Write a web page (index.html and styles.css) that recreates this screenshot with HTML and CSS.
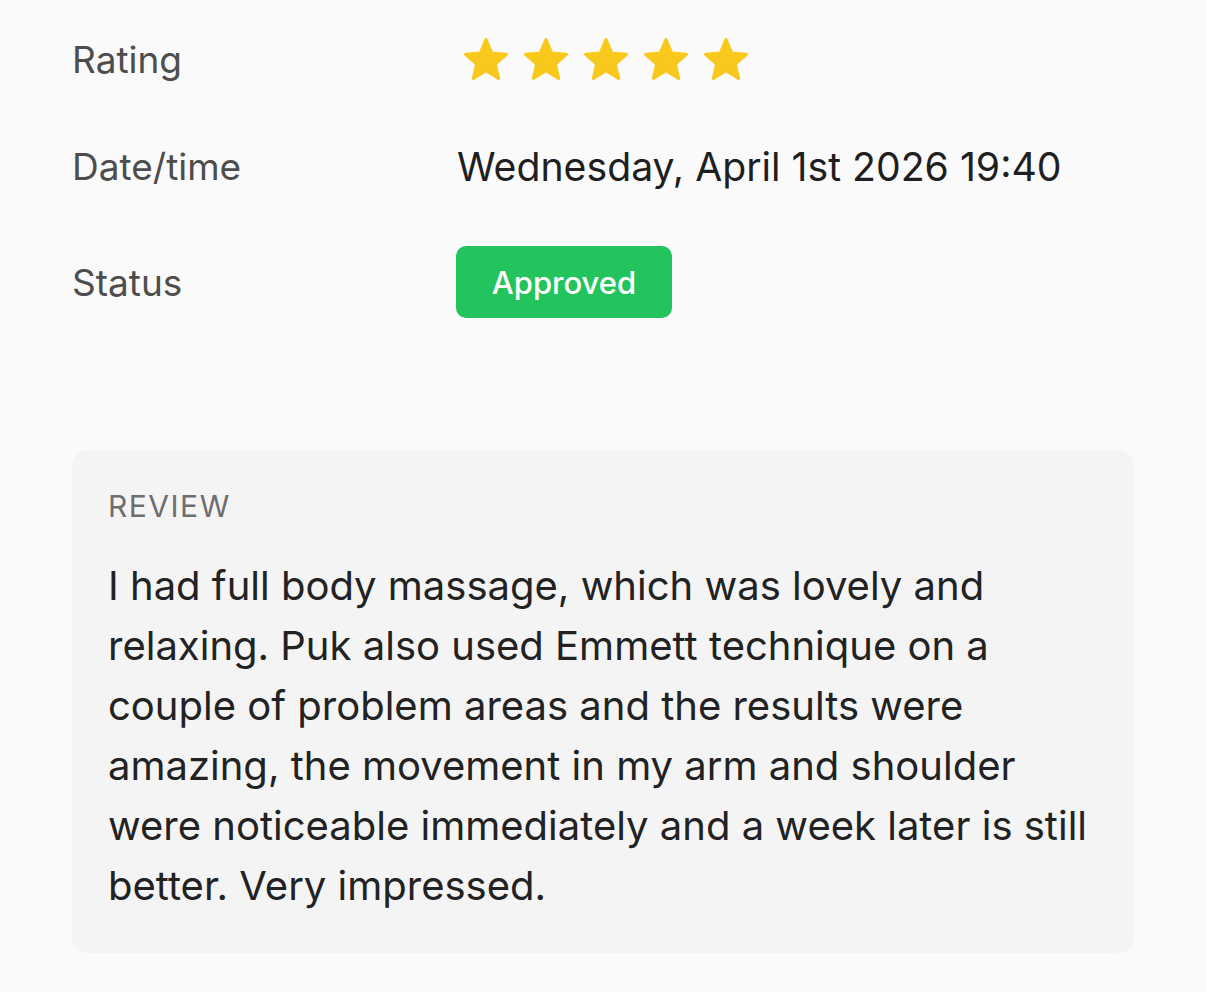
FILE: index.html
```html
<!DOCTYPE html>
<html>
<head>
<meta charset="utf-8">
<link rel="stylesheet" href="styles.css">
</head>
<body>
<main class="page">
  <section class="details">
    <div class="row row-rating">
      <div class="label">Rating</div>
      <div class="value stars">
        <svg class="star" viewBox="1.25 1.25 21.5 20.5"><path d="M12 17.27L18.18 21l-1.64-7.03L22 9.24l-7.19-.61L12 2 9.19 8.63 2 9.24l5.46 4.73L5.82 21z"/></svg>
        <svg class="star" viewBox="1.25 1.25 21.5 20.5"><path d="M12 17.27L18.18 21l-1.64-7.03L22 9.24l-7.19-.61L12 2 9.19 8.63 2 9.24l5.46 4.73L5.82 21z"/></svg>
        <svg class="star" viewBox="1.25 1.25 21.5 20.5"><path d="M12 17.27L18.18 21l-1.64-7.03L22 9.24l-7.19-.61L12 2 9.19 8.63 2 9.24l5.46 4.73L5.82 21z"/></svg>
        <svg class="star" viewBox="1.25 1.25 21.5 20.5"><path d="M12 17.27L18.18 21l-1.64-7.03L22 9.24l-7.19-.61L12 2 9.19 8.63 2 9.24l5.46 4.73L5.82 21z"/></svg>
        <svg class="star" viewBox="1.25 1.25 21.5 20.5"><path d="M12 17.27L18.18 21l-1.64-7.03L22 9.24l-7.19-.61L12 2 9.19 8.63 2 9.24l5.46 4.73L5.82 21z"/></svg>
      </div>
    </div>
    <div class="row row-date">
      <div class="label">Date/time</div>
      <div class="value date">Wednesday, April 1st 2026 19:40</div>
    </div>
    <div class="row row-status">
      <div class="label">Status</div>
      <div class="value"><span class="badge">Approved</span></div>
    </div>
  </section>
  <section class="review">
    <h2 class="review-title">REVIEW</h2>
    <p class="review-text">I had full body massage, which was lovely and relaxing. Puk also used Emmett technique on a couple of problem areas and the results were amazing, the movement in my arm and shoulder were noticeable immediately and a week later is still better. Very impressed.</p>
  </section>
</main>
</body>
</html>
```

FILE: styles.css
```css
* { box-sizing: border-box; }
html, body { margin: 0; padding: 0; }
body {
  background: #fafafa;
  font-family: "Inter", "Liberation Sans", sans-serif;
  color: #222;
  width: 1206px;
  height: 992px;
  overflow: hidden;
}
.page {
  padding: 0 72px;
}
.details {
  display: flex;
  flex-direction: column;
}
.row {
  display: flex;
  align-items: center;
}
.row-rating { height: 118px; }
.row-date { height: 96px; }
.row-status { height: 136px; }
.label {
  width: 385px;
  flex: none;
  font-size: 37px;
  color: #4d4d4d;
}
.stars {
  display: flex;
  gap: 16px;
  padding-left: 7px;
}
.star {
  width: 44px;
  height: 42px;
  fill: #f8c81c;
  stroke: #f8c81c;
  stroke-width: 1.5;
  stroke-linejoin: round;
}
.date {
  font-size: 39.2px;
  color: #1f1f1f;
}
.badge {
  display: inline-flex;
  align-items: center;
  justify-content: center;
  width: 216px;
  height: 72px;
  border-radius: 10px;
  background: #23c35d;
  color: #fff;
  font-size: 31px;
  font-weight: 500;
  margin-left: -1px;
}
.review {
  margin-top: 100px;
  background: #f4f4f4;
  border-radius: 16px;
  padding: 38px 36px 0;
  height: 503px;
}
.review-title {
  margin: 0;
  font-size: 30px;
  line-height: 36px;
  font-weight: 400;
  letter-spacing: 1.5px;
  color: #6e6e6e;
}
.review-text {
  margin: 32px 0 0;
  max-width: 990px;
  font-size: 40px;
  line-height: 60px;
  color: #222;
}
```
